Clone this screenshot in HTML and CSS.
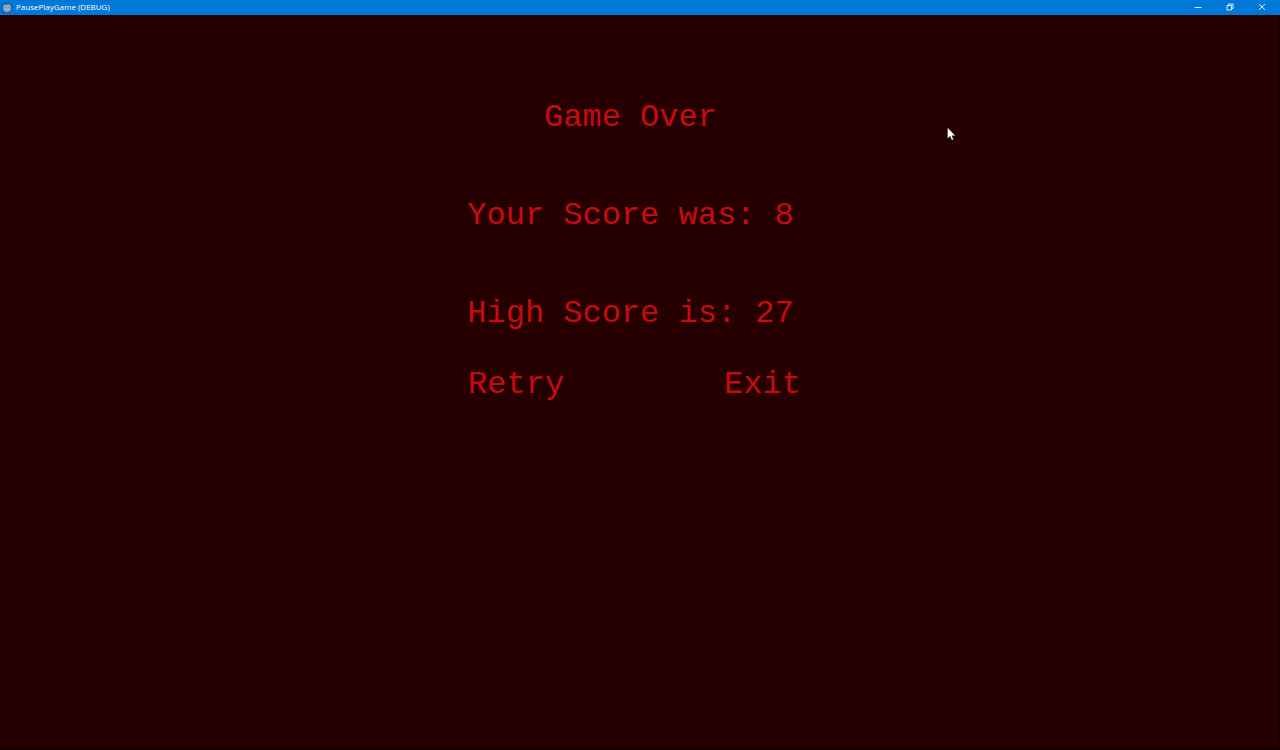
FILE: index.html
```html
<!DOCTYPE html>
<html lang="en">
<head>
  <meta charset="UTF-8">
  <meta name="viewport" content="width=device-width, initial-scale=1.0">
  <title>PausePlayGame (DEBUG)</title>
  <link rel="stylesheet" href="styles.css">
</head>
<body>
  <header class="titlebar">
    <svg class="app-icon" viewBox="0 0 12 12" aria-hidden="true">
      <rect x="1" y="1" width="10" height="10" rx="4" fill="#3f78ab" stroke="#23588c"/>
      <path d="M2.5 4.5 3.5 2.5 5 3.2h2l1.500-.7 1 2v3.500Q6 11.500 2.500 8z" fill="#8bb5d8"/>
      <circle cx="4.5" cy="5.5" r=".8" fill="#5487b4"/>
      <circle cx="7.5" cy="5.5" r=".8" fill="#5487b4"/>
    </svg>
    <span class="app-name">PausePlayGame (DEBUG)</span>
    <div class="window-buttons">
      <button type="button" aria-label="Minimize">
        <svg viewBox="0 0 8 8"><path d="M.5 4.500h7"/></svg>
      </button>
      <button type="button" aria-label="Restore">
        <svg viewBox="0 0 8 8"><path d="M1 2.500h4.500V7H1zM2.500 2.500V1H7v4.500H5.500"/></svg>
      </button>
      <button type="button" aria-label="Close">
        <svg viewBox="0 0 8 8"><path d="M1 1l6 6M7 1l-6 6"/></svg>
      </button>
    </div>
  </header>

  <main class="game">
    <h1>Game Over</h1>
    <p>Your Score was: 8</p>
    <p>High Score is: 27</p>
    <div class="menu">
      <button type="button">Retry</button>
      <button type="button">Exit</button>
    </div>
    <svg class="cursor" viewBox="0 0 9 14" aria-hidden="true">
      <path d="M.5.5v11l2.6-2.3 1.7 4 1.7-.8-1.6-3.7h3.4z" fill="#fff" stroke="#000" stroke-width=".3"/>
    </svg>
  </main>
</body>
</html>
```
FILE: styles.css
```css
html, body {
  height: 100%;
  margin: 0;
}
body {
  display: flex;
  flex-direction: column;
  background: #260000;
}
button {
  padding: 0;
  border: none;
  background: none;
  color: inherit;
  font: inherit;
  cursor: pointer;
}
.titlebar {
  display: flex;
  align-items: center;
  height: 15px;
  padding: 0 2px 0 1px;
  background: #0078d7;
  color: #fff;
  font-family: "Open Sans", "Noto Sans", sans-serif;
  font-size: 8px;
  line-height: 14px;
}
.app-icon {
  width: 12px;
  height: 12px;
  margin-right: 3px;
}
.app-name {
  align-self: flex-start;
}
.window-buttons {
  display: flex;
  height: 14px;
  margin-left: auto;
  align-self: flex-start;
}
.window-buttons button {
  display: flex;
  align-items: center;
  justify-content: center;
  width: 32px;
}
.window-buttons svg {
  width: 8px;
  height: 8px;
  fill: none;
  stroke: #d9ecfb;
  stroke-width: 1;
}
.game {
  position: relative;
  flex: 1;
  display: flex;
  flex-direction: column;
  align-items: center;
  padding: 81px 18px 0 0;
  border: solid #120000;
  border-width: 0 1px 2px 0;
  color: #c80a10;
  font-family: "Liberation Mono", monospace;
  font-size: 32px;
  line-height: 44px;
}
.game h1, .game p {
  margin: 0 0 54px;
  font-size: 32px;
  font-weight: normal;
}
.game p + p {
  margin-bottom: 27px;
}
.menu {
  display: flex;
  gap: 160px;
  margin-left: 8px;
}
.cursor {
  position: absolute;
  top: 112px;
  left: 947px;
  width: 9px;
  height: 14px;
}
```
